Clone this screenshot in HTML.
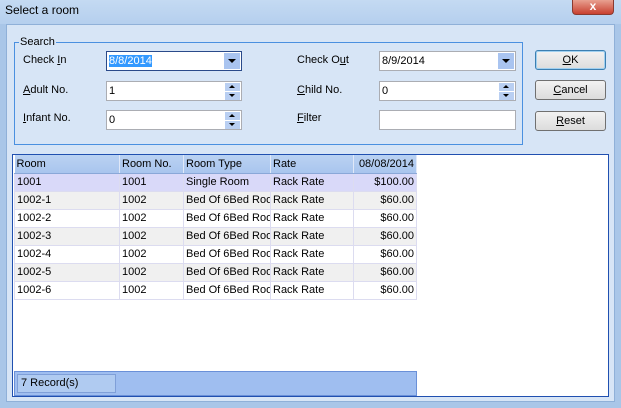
<!DOCTYPE html><html><head><style>
*{box-sizing:border-box}
body{margin:0;width:621px;height:408px;overflow:hidden;font-family:"Liberation Sans",sans-serif;font-size:11px;color:#000;background:#a9c6e8;position:relative}
.a{position:absolute}
.title{left:0;top:0;width:621px;height:24px;background:linear-gradient(#c4daf2,#b5cfee)}
.client{left:6px;top:24px;width:609px;height:378px;background:#d7e5f6;border:1px solid #8fb0d8}
.lbl{position:absolute;font-size:11px}
.inp{position:absolute;background:#fff;border:1px solid #abadb3;height:20px;padding:3px 0 0 2px}
.dd{position:absolute;right:1px;top:1px;width:16px;height:16px;background:#a9c4f0;}
.dd:after{content:"";position:absolute;left:4px;top:6px;border-left:4px solid transparent;border-right:4px solid transparent;border-top:4px solid #000}
.sp{position:absolute;right:1px;width:15px;height:8px;background:#b9cff2}
.up:after{content:"";position:absolute;left:4px;top:2px;border-left:3px solid transparent;border-right:3px solid transparent;border-bottom:3px solid #000}
.dn:after{content:"";position:absolute;left:4px;top:2px;border-left:3px solid transparent;border-right:3px solid transparent;border-top:3px solid #000}
.btn{position:absolute;left:535px;width:71px;height:20px;border:1px solid #707070;border-radius:3px;background:linear-gradient(#f2f2f2,#dcdcdc);text-align:center;line-height:18px}
table{border-collapse:collapse;position:absolute;left:14px;top:155px;table-layout:fixed;width:402px}
td{height:18px;padding:0 2px;border:1px solid #dcdcf0;white-space:nowrap;overflow:hidden;font-size:11px}
th{height:18px;font-weight:normal;text-align:left;padding:0 2px;background:linear-gradient(#bad2f2,#a9c5ee);border-right:1px solid #e0e8f8;border-bottom:1px solid #8aa8d8;white-space:nowrap;overflow:hidden}
u{text-decoration:underline}
</style></head><body>
<div class="a title"></div>
<div class="a" style="left:5px;top:3px;font-size:12px">Select a room</div>
<div class="a" style="left:572px;top:0;width:42px;height:15px;background:linear-gradient(#e8a090,#c84030);border:1px solid #8a3a30;border-top:none;border-radius:0 0 4px 4px;color:#fff;font-weight:bold;text-align:center;font-size:12px;line-height:13px">x</div>
<div class="a client"></div>
<div class="a" style="left:14px;top:42px;width:509px;height:103px;border:1px solid #4a90e0"></div>
<div class="a" style="left:19px;top:36px;background:#d7e5f6;padding:0 1px">Search</div>
<div class="lbl" style="left:23px;top:54px">Check <u>I</u>n</div>
<div class="lbl" style="left:23px;top:84px"><u>A</u>dult No.</div>
<div class="lbl" style="left:23px;top:112px"><u>I</u>nfant No.</div>
<div class="lbl" style="left:297px;top:54px">Check O<u>u</u>t</div>
<div class="lbl" style="left:297px;top:84px"><u>C</u>hild No.</div>
<div class="lbl" style="left:297px;top:112px"><u>F</u>ilter</div>
<div class="inp" style="left:106px;top:51px;width:136px;border:1px solid #2a4a8a"><span style="background:#3399ff;color:#fff">8/8/2014</span><div class="dd"></div></div>
<div class="inp" style="left:379px;top:51px;width:137px">8/9/2014<div class="dd"></div></div>
<div class="inp" style="left:106px;top:81px;width:136px">1<div class="sp up" style="top:1px"></div><div class="sp dn" style="top:10px"></div></div>
<div class="inp" style="left:379px;top:81px;width:137px">0<div class="sp up" style="top:1px"></div><div class="sp dn" style="top:10px"></div></div>
<div class="inp" style="left:106px;top:110px;width:136px">0<div class="sp up" style="top:1px"></div><div class="sp dn" style="top:10px"></div></div>
<div class="inp" style="left:379px;top:110px;width:137px"></div>
<div class="btn" style="top:50px;border-color:#3c7fb1;box-shadow:0 0 0 1px #a0d0f0 inset"><u>O</u>K</div>
<div class="btn" style="top:80px"><u>C</u>ancel</div>
<div class="btn" style="top:111px"><u>R</u>eset</div>
<div class="a" style="left:12px;top:154px;width:597px;height:243px;background:#fff;border:1px solid #2050b0"></div>
<table>
<colgroup><col style="width:105px"><col style="width:64px"><col style="width:87px"><col style="width:83px"><col style="width:63px"></colgroup>
<tr><th>Room</th><th>Room No.</th><th>Room Type</th><th>Rate</th><th style="text-align:right">08/08/2014</th></tr>
<tr style="background:#d9d9f9"><td>1001</td><td>1001</td><td>Single Room</td><td>Rack Rate</td><td style="text-align:right">$100.00</td></tr>
<tr style="background:#f0f0f0"><td>1002-1</td><td>1002</td><td>Bed Of 6Bed Room</td><td>Rack Rate</td><td style="text-align:right">$60.00</td></tr>
<tr><td>1002-2</td><td>1002</td><td>Bed Of 6Bed Room</td><td>Rack Rate</td><td style="text-align:right">$60.00</td></tr>
<tr style="background:#f0f0f0"><td>1002-3</td><td>1002</td><td>Bed Of 6Bed Room</td><td>Rack Rate</td><td style="text-align:right">$60.00</td></tr>
<tr><td>1002-4</td><td>1002</td><td>Bed Of 6Bed Room</td><td>Rack Rate</td><td style="text-align:right">$60.00</td></tr>
<tr style="background:#f0f0f0"><td>1002-5</td><td>1002</td><td>Bed Of 6Bed Room</td><td>Rack Rate</td><td style="text-align:right">$60.00</td></tr>
<tr><td>1002-6</td><td>1002</td><td>Bed Of 6Bed Room</td><td>Rack Rate</td><td style="text-align:right">$60.00</td></tr>
</table>
<div class="a" style="left:14px;top:371px;width:403px;height:25px;background:#9fbef0;border:1px solid #6a90d8"></div>
<div class="a" style="left:17px;top:374px;width:99px;height:19px;background:#b0cbf1;border:1px solid #7f9fd8;padding:2px 3px">7 Record(s)</div>
</body></html>
